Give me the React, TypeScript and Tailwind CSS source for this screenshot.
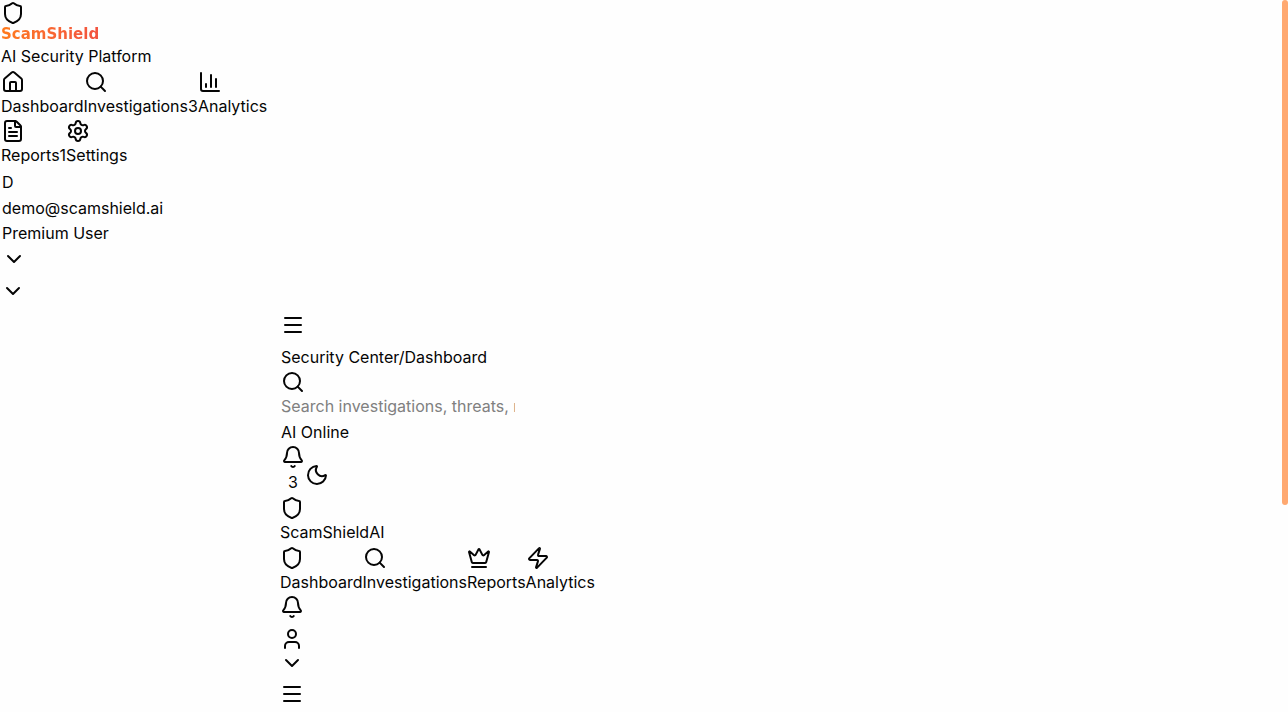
import React from "react";
import {
  Bell,
  ChartColumn,
  ChevronDown,
  Crown,
  FileText,
  House,
  Menu,
  Moon,
  Search,
  Settings,
  Shield,
  User,
  Zap,
  type LucideIcon,
} from "lucide-react";

type NavItem = { label: string; icon: LucideIcon; badge?: number };

const primaryNav: NavItem[] = [
  { label: "Dashboard", icon: House },
  { label: "Investigations", icon: Search, badge: 3 },
  { label: "Analytics", icon: ChartColumn },
];

const secondaryNav: NavItem[] = [
  { label: "Reports", icon: FileText, badge: 1 },
  { label: "Settings", icon: Settings },
];

const topNav: NavItem[] = [
  { label: "Dashboard", icon: Shield },
  { label: "Investigations", icon: Search },
  { label: "Reports", icon: Crown },
  { label: "Analytics", icon: Zap },
];

function NavRow({ items, label }: { items: NavItem[]; label: string }) {
  return (
    <nav aria-label={label} className="flex">
      {items.map(({ label: text, icon: Icon, badge }) => (
        <a key={text} href="#" className="block">
          <Icon size={24} />
          <span className="block">
            {text}
            {badge}
          </span>
        </a>
      ))}
    </nav>
  );
}

function Sidebar() {
  return (
    <aside className="pt-px">
      <div className="pl-px">
        <Shield size={24} />
        <h1 className="w-fit bg-linear-to-r from-[#ff7a1a] to-[#f2523f] bg-clip-text font-['DejaVu_Sans',sans-serif] text-[15px] leading-[19px] font-bold text-transparent">
          ScamShield
        </h1>
        <p>AI Security Platform</p>
      </div>
      <div className="flex flex-col gap-px pt-0.5 pl-px">
        <NavRow items={primaryNav} label="Main" />
        <NavRow items={secondaryNav} label="Workspace" />
      </div>
      <button type="button" aria-label="Account" className="block pt-[3px] pl-0.5 text-left">
        <span className="block">D</span>
        <span className="block pt-0.5">demo@scamshield.ai</span>
        <span className="block pt-px">Premium User</span>
        <ChevronDown size={24} className="mt-0.5" />
      </button>
      <button type="button" aria-label="Collapse sidebar" className="block pt-2 pl-px">
        <ChevronDown size={24} />
      </button>
    </aside>
  );
}

function Header() {
  return (
    <header className="pt-2.5 pl-px">
      <button type="button" aria-label="Open menu" className="block">
        <Menu size={24} />
      </button>
      <p className="pt-2">Security Center/Dashboard</p>
      <div className="pt-px">
        <Search size={24} />
        <input
          type="text"
          aria-label="Search"
          placeholder="Search investigations, threats, reports..."
          className="block h-6 w-[234px] bg-transparent outline-none placeholder:text-[#808080]"
        />
      </div>
      <p className="pt-0.5">AI Online</p>
      <div className="flex items-center pt-px">
        <button type="button" aria-label="Notifications" className="block text-center">
          <Bell size={24} />
          <span className="block pt-px">3</span>
        </button>
        <button type="button" aria-label="Toggle dark mode" className="block pt-2.5">
          <Moon size={24} />
        </button>
      </div>
    </header>
  );
}

function TopBar() {
  return (
    <section className="pt-0.5">
      <Shield size={24} />
      <p>ScamShieldAI</p>
      <div className="pt-0.5">
        <NavRow items={topNav} label="Site" />
      </div>
      <button type="button" aria-label="Alerts" className="block pt-px">
        <Bell size={24} />
      </button>
      <button type="button" aria-label="Profile" className="block pt-2">
        <User size={24} />
        <ChevronDown size={24} />
      </button>
      <button type="button" aria-label="Open site menu" className="block pt-[7px]">
        <Menu size={24} />
      </button>
    </section>
  );
}

export default function App() {
  return (
    <div className="min-h-screen bg-[#fefefe] font-['Inter',sans-serif] text-base leading-6 text-[#050505]">
      <Sidebar />
      <main className="pl-[280px]">
        <Header />
        <TopBar />
      </main>
      <div aria-hidden="true" className="fixed top-0 right-0 h-[505px] w-1.5 rounded-full bg-[#ffa971]" />
    </div>
  );
}
